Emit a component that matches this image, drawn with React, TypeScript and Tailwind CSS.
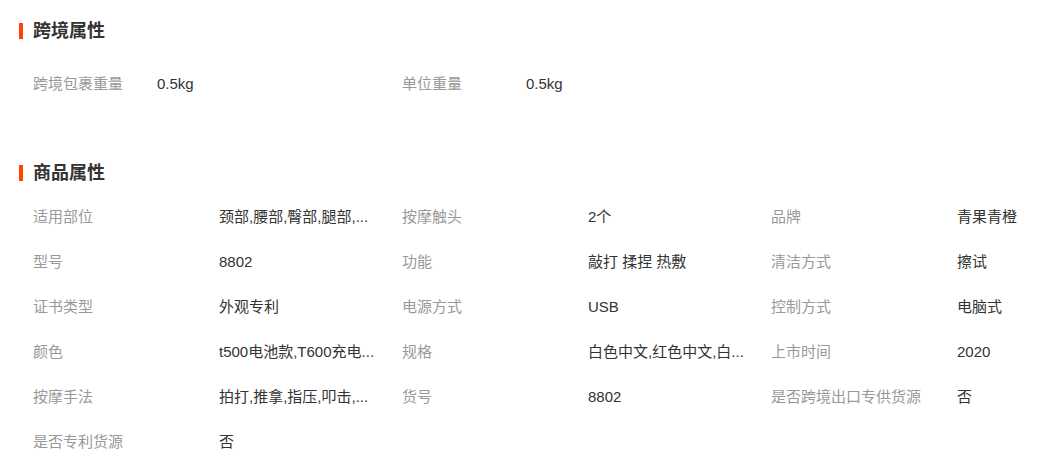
import React from 'react'

type Attr = { label: string; value: string }

const crossBorder: Attr[] = [
  { label: '跨境包裹重量', value: '0.5kg' },
  { label: '单位重量', value: '0.5kg' },
]

const product: Attr[] = [
  { label: '适用部位', value: '颈部,腰部,臀部,腿部,...' },
  { label: '按摩触头', value: '2个' },
  { label: '品牌', value: '青果青橙' },
  { label: '型号', value: '8802' },
  { label: '功能', value: '敲打 揉捏 热敷' },
  { label: '清洁方式', value: '擦试' },
  { label: '证书类型', value: '外观专利' },
  { label: '电源方式', value: 'USB' },
  { label: '控制方式', value: '电脑式' },
  { label: '颜色', value: 't500电池款,T600充电...' },
  { label: '规格', value: '白色中文,红色中文,白...' },
  { label: '上市时间', value: '2020' },
  { label: '按摩手法', value: '拍打,推拿,指压,叩击,...' },
  { label: '货号', value: '8802' },
  { label: '是否跨境出口专供货源', value: '否' },
  { label: '是否专利货源', value: '否' },
]

function SectionTitle({ title }: { title: string }) {
  return (
    <div className="flex items-center h-[18px]">
      <div className="w-1 h-4 bg-[#ff4400] mr-[10px]" />
      <h2 className="text-[18px] font-bold text-[#333] leading-[18px]">{title}</h2>
    </div>
  )
}

function AttrGrid({ items, labelWidth }: { items: Attr[]; labelWidth: string }) {
  return (
    <div className="grid grid-cols-[369px_369px_369px] pl-[14px]">
      {items.map(item => (
        <div key={item.label} className="flex items-center h-[45px] text-[15px]">
          <span className={`${labelWidth} shrink-0 text-[#999] whitespace-nowrap`}>{item.label}</span>
          <span className="text-[#333] whitespace-nowrap">{item.value}</span>
        </div>
      ))}
    </div>
  )
}

export default function App() {
  return (
    <div
      className="bg-white w-[1052px] h-[453px] overflow-hidden px-[19px]"
      style={{ fontFamily: '"Liberation Sans", "Noto Sans CJK SC", sans-serif' }}
    >
      <div className="pt-[22px]">
        <SectionTitle title="跨境属性" />
        <div className="mt-[22px]">
          <AttrGrid items={crossBorder} labelWidth="w-[124px]" />
        </div>
      </div>

      <div className="mt-[57px]">
        <SectionTitle title="商品属性" />
        <div className="mt-[13px]">
          <AttrGrid items={product} labelWidth="w-[186px]" />
        </div>
      </div>
    </div>
  )
}
